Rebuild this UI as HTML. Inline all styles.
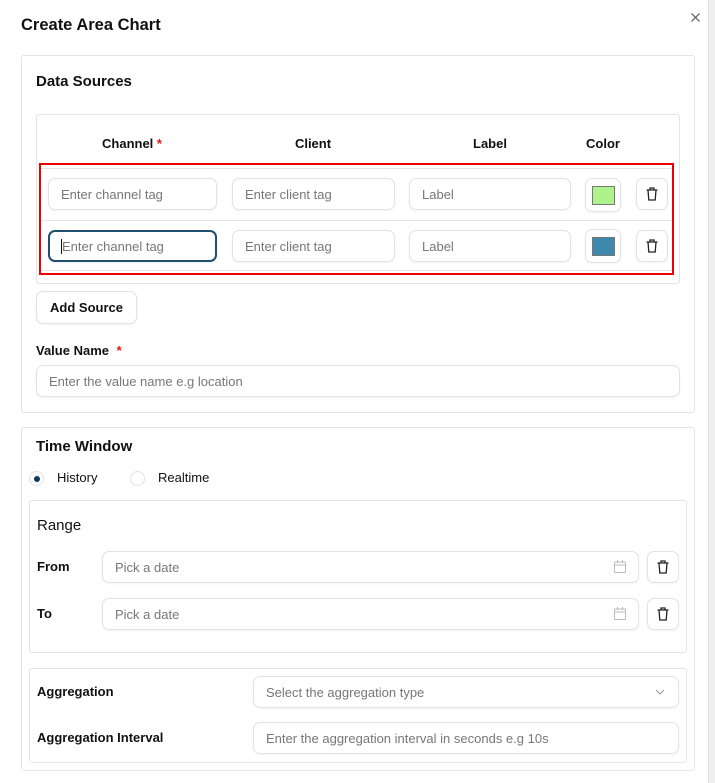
<!DOCTYPE html>
<html><head><meta charset="utf-8"><style>
*{box-sizing:border-box;margin:0;padding:0}
body{width:715px;height:783px;background:#fff;font-family:"Liberation Sans",sans-serif;color:#111;position:relative;overflow:hidden}
.a{position:absolute}
.card{position:absolute;border:1px solid #e4e4e7;border-radius:3px}
.inp{position:absolute;border:1px solid #e2e2e6;border-radius:7px;height:32px;font-size:13px;color:#777;padding-left:12px;line-height:31px;box-shadow:0 1px 2px rgba(0,0,0,.05)}
.lbl{position:absolute;font-size:13px;font-weight:bold}
.btn{position:absolute;border:1px solid #e2e2e6;border-radius:7px;width:32px;height:32px;box-shadow:0 1px 2px rgba(0,0,0,.05);display:flex;align-items:center;justify-content:center}
.hd{position:absolute;font-size:13px;font-weight:bold;transform:translateX(-50%);top:136px}
</style></head><body>
<div class="a" style="left:708px;top:0;width:7px;height:783px;background:#efefef;border-left:1px solid #e0e0e0"></div>
<div class="a" style="left:21px;top:16px;font-size:16.5px;font-weight:bold">Create Area Chart</div>
<svg class="a" style="left:691px;top:13px" width="9" height="9" viewBox="0 0 9 9" stroke="#555" stroke-width="1.2"><path d="M0.5 0.5l8 8M8.5 0.5l-8 8"/></svg>

<div class="card" style="left:21px;top:55px;width:674px;height:358px"></div>
<div class="a" style="left:36px;top:73px;font-size:15px;font-weight:bold">Data Sources</div>
<div class="card" style="left:36px;top:114px;width:644px;height:170px"></div>
<div class="hd" style="left:132px">Channel <span style="color:#e11">*</span></div>
<div class="hd" style="left:313px">Client</div>
<div class="hd" style="left:490px">Label</div>
<div class="hd" style="left:603px">Color</div>
<div class="a" style="left:40px;top:168px;width:633px;height:1px;background:#e5e5e5"></div>
<div class="a" style="left:40px;top:220px;width:633px;height:1px;background:#e5e5e5"></div>
<div class="a" style="left:40px;top:270px;width:633px;height:1px;background:#e5e5e5"></div>
<div class="a" style="left:39px;top:163px;width:635px;height:112px;border:2px solid #e00"></div>

<div class="inp" style="left:48px;top:178px;width:169px">Enter channel tag</div>
<div class="inp" style="left:232px;top:178px;width:163px">Enter client tag</div>
<div class="inp" style="left:409px;top:178px;width:162px">Label</div>
<div class="btn" style="left:585px;top:178px;width:36px;height:34px"><div style="width:23px;height:19px;background:#aef28b;border:1px solid #777"></div></div>
<div class="btn" style="left:636px;top:178px"><svg width="12" height="14" viewBox="0 0 12 14" fill="none" stroke="#222" stroke-width="1.3"><path d="M0.5 3h11M4 3V1h4v2M2 3l0.8 10h6.4L10 3"/></svg></div>

<div class="inp" style="left:48px;top:230px;width:169px;border:2px solid #1f4e6e;padding-left:11px;line-height:29px;color:#777"><span style="border-left:1px solid #111">E</span>nter channel tag</div>
<div class="inp" style="left:232px;top:230px;width:163px">Enter client tag</div>
<div class="inp" style="left:409px;top:230px;width:162px">Label</div>
<div class="btn" style="left:585px;top:229px;width:36px;height:34px"><div style="width:23px;height:19px;background:#3f88ad;border:1px solid #777"></div></div>
<div class="btn" style="left:636px;top:230px"><svg width="12" height="14" viewBox="0 0 12 14" fill="none" stroke="#222" stroke-width="1.3"><path d="M0.5 3h11M4 3V1h4v2M2 3l0.8 10h6.4L10 3"/></svg></div>

<div class="btn" style="left:36px;top:291px;width:101px;height:33px;font-size:13px;font-weight:bold">Add Source</div>
<div class="lbl" style="left:36px;top:343px">Value Name <span style="color:#e11;margin-left:4px">*</span></div>
<div class="inp" style="left:36px;top:365px;width:644px">Enter the value name e.g location</div>

<div class="card" style="left:21px;top:427px;width:674px;height:344px"></div>
<div class="a" style="left:36px;top:438px;font-size:15px;font-weight:bold">Time Window</div>
<div class="a" style="left:29px;top:471px;width:15px;height:15px;border-radius:50%;border:1px solid #e2e2e6;display:flex;align-items:center;justify-content:center"><div style="width:6px;height:6px;border-radius:50%;background:#0c3a5e"></div></div>
<div class="a" style="left:57px;top:470px;font-size:13px">History</div>
<div class="a" style="left:130px;top:471px;width:15px;height:15px;border-radius:50%;border:1px solid #e2e2e6"></div>
<div class="a" style="left:158px;top:470px;font-size:13px">Realtime</div>

<div class="card" style="left:29px;top:500px;width:658px;height:153px"></div>
<div class="a" style="left:37px;top:517px;font-size:15px">Range</div>
<div class="lbl" style="left:37px;top:559px">From</div>
<div class="inp" style="left:102px;top:551px;width:537px">Pick a date</div>
<svg class="a" style="left:614px;top:560px" width="12" height="13" viewBox="0 0 12 13" fill="none" stroke="#bbb"><rect x="0.5" y="2" width="11" height="10.5" rx="1"/><path d="M0.5 5h11M3.5 0v3M8.5 0v3"/></svg>
<div class="btn" style="left:647px;top:551px"><svg width="12" height="14" viewBox="0 0 12 14" fill="none" stroke="#222" stroke-width="1.3"><path d="M0.5 3h11M4 3V1h4v2M2 3l0.8 10h6.4L10 3"/></svg></div>
<div class="lbl" style="left:37px;top:606px">To</div>
<div class="inp" style="left:102px;top:598px;width:537px">Pick a date</div>
<svg class="a" style="left:614px;top:607px" width="12" height="13" viewBox="0 0 12 13" fill="none" stroke="#bbb"><rect x="0.5" y="2" width="11" height="10.5" rx="1"/><path d="M0.5 5h11M3.5 0v3M8.5 0v3"/></svg>
<div class="btn" style="left:647px;top:598px"><svg width="12" height="14" viewBox="0 0 12 14" fill="none" stroke="#222" stroke-width="1.3"><path d="M0.5 3h11M4 3V1h4v2M2 3l0.8 10h6.4L10 3"/></svg></div>

<div class="card" style="left:29px;top:668px;width:658px;height:95px"></div>
<div class="lbl" style="left:37px;top:684px">Aggregation</div>
<div class="inp" style="left:253px;top:676px;width:426px">Select the aggregation type</div>
<svg class="a" style="left:655px;top:689px" width="10" height="6" viewBox="0 0 10 6" fill="none" stroke="#999"><path d="M1 1l4 4 4-4"/></svg>
<div class="lbl" style="left:37px;top:730px">Aggregation Interval</div>
<div class="inp" style="left:253px;top:722px;width:426px">Enter the aggregation interval in seconds e.g 10s</div>
</body></html>
